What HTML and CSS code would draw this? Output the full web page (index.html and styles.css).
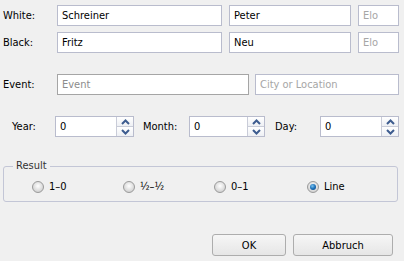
FILE: index.html
```html
<!DOCTYPE html>
<html>
<head>
<meta charset="utf-8">
<link rel="stylesheet" href="styles.css">
</head>
<body>
<div class="dlg">
  <div class="row r-white">
    <span class="lbl">White:</span>
    <div class="field w-last">Schreiner</div>
    <div class="field w-first">Peter</div>
    <div class="field w-elo ph">Elo</div>
  </div>
  <div class="row r-black">
    <span class="lbl">Black:</span>
    <div class="field w-last">Fritz</div>
    <div class="field w-first">Neu</div>
    <div class="field w-elo ph">Elo</div>
  </div>
  <div class="row r-event">
    <span class="lbl">Event:</span>
    <div class="field w-event ph dark focus">Event</div>
    <div class="field w-city ph">City or Location</div>
  </div>
  <div class="row r-date">
    <span class="lbl l-year">Year:</span>
    <div class="spin s-year">
      <span class="spin-val">0</span>
      <span class="spin-btns">
        <span class="sb"><svg width="9" height="6" viewBox="0 0 9 6"><path d="M1 5 L4.5 1.5 L8 5" fill="none" stroke="#3d5c8f" stroke-width="2"/></svg></span>
        <span class="sb"><svg width="9" height="6" viewBox="0 0 9 6"><path d="M1 1 L4.5 4.5 L8 1" fill="none" stroke="#3d5c8f" stroke-width="2"/></svg></span>
      </span>
    </div>
    <span class="lbl l-month">Month:</span>
    <div class="spin s-month">
      <span class="spin-val">0</span>
      <span class="spin-btns">
        <span class="sb"><svg width="9" height="6" viewBox="0 0 9 6"><path d="M1 5 L4.5 1.5 L8 5" fill="none" stroke="#3d5c8f" stroke-width="2"/></svg></span>
        <span class="sb"><svg width="9" height="6" viewBox="0 0 9 6"><path d="M1 1 L4.5 4.5 L8 1" fill="none" stroke="#3d5c8f" stroke-width="2"/></svg></span>
      </span>
    </div>
    <span class="lbl l-day">Day:</span>
    <div class="spin s-day">
      <span class="spin-val">0</span>
      <span class="spin-btns">
        <span class="sb"><svg width="9" height="6" viewBox="0 0 9 6"><path d="M1 5 L4.5 1.5 L8 5" fill="none" stroke="#3d5c8f" stroke-width="2"/></svg></span>
        <span class="sb"><svg width="9" height="6" viewBox="0 0 9 6"><path d="M1 1 L4.5 4.5 L8 1" fill="none" stroke="#3d5c8f" stroke-width="2"/></svg></span>
      </span>
    </div>
  </div>
  <div class="group">
    <span class="legend">Result</span>
    <div class="radios">
      <span class="radio"><span class="dot"></span>1–0</span>
      <span class="radio"><span class="dot"></span>½–½</span>
      <span class="radio"><span class="dot"></span>0–1</span>
      <span class="radio"><span class="dot on"></span>Line</span>
    </div>
  </div>
  <div class="buttons">
    <span class="btn b-ok">OK</span>
    <span class="btn b-cancel">Abbruch</span>
  </div>
</div>
</body>
</html>
```

FILE: styles.css
```css
html, body {
  margin: 0;
  padding: 0;
}
body {
  background: #f0f0f0;
  font-family: "DejaVu Sans Condensed", "Liberation Sans", sans-serif;
  font-size: 11px;
  color: #000;
  width: 404px;
  height: 261px;
  overflow: hidden;
}
.dlg {
  padding: 5px 0 0 3px;
}
.row {
  display: flex;
  align-items: center;
  height: 21px;
}
.r-white { margin-bottom: 6px; }
.r-black { margin-bottom: 21px; }
.r-event { margin-bottom: 21px; }
.lbl {
  width: 54px;
  flex: none;
}
.field {
  box-sizing: border-box;
  height: 21px;
  border: 1px solid #b9bccd;
  background: #fff;
  padding-left: 4px;
  line-height: 19px;
  flex: none;
  white-space: nowrap;
  overflow: hidden;
}
.ph { color: #a6a6a6; }
.ph.dark { color: #8c8c8c; }
.focus { border-color: #a5a5a5; }
.w-last { width: 165px; margin-right: 7px; }
.w-first { width: 122px; margin-right: 7px; }
.w-elo { width: 41px; }
.w-event { width: 192px; margin-right: 6px; }
.w-city { width: 144px; }

.l-year { width: 43px; margin-left: 9px; }
.l-month { width: 46px; margin-left: 9px; }
.l-day { width: 45px; margin-left: 10px; }
.spin {
  box-sizing: border-box;
  height: 21px;
  border: 1px solid #b9bccd;
  background: #fff;
  display: flex;
  flex: none;
}
.s-year { width: 79px; }
.s-month { width: 76px; }
.s-day { width: 79px; }
.spin-val {
  flex: 1;
  padding-left: 4px;
  line-height: 19px;
}
.spin-btns {
  width: 16px;
  display: flex;
  flex-direction: column;
  border-left: 1px solid #c9ccd8;
}
.sb {
  flex: 1;
  display: flex;
  align-items: center;
  justify-content: center;
  background: linear-gradient(#ffffff, #eef0f4);
}
.sb + .sb {
  border-top: 1px solid #c9ccd8;
}
.sb svg { display: block; }

.group {
  position: relative;
  box-sizing: border-box;
  margin-top: 29px;
  width: 395px;
  height: 36px;
  border: 1px solid #c3c6d6;
  border-radius: 3px;
}
.legend {
  position: absolute;
  top: -8px;
  left: 9px;
  padding: 0 3px;
  background: #f0f0f0;
  color: #333;
  line-height: 14px;
}
.radios {
  display: grid;
  grid-template-columns: 91px 91px 93px 91px;
  padding: 14px 0 0 28px;
}
.radio {
  display: flex;
  align-items: center;
  height: 12px;
  line-height: 12px;
}
.dot {
  box-sizing: border-box;
  width: 12px;
  height: 12px;
  border-radius: 50%;
  border: 1px solid #9a9a9a;
  background: radial-gradient(circle at 50% 40%, #ffffff 0%, #e4e4e4 45%, #c4c4c4 100%);
  margin-right: 5px;
  position: relative;
  flex: none;
}
.dot.on::after {
  content: "";
  position: absolute;
  left: 2px;
  top: 2px;
  width: 6px;
  height: 6px;
  border-radius: 50%;
  background: radial-gradient(circle at 40% 35%, #7cc4f0 0%, #1c70b8 50%, #0c3f78 100%);
}

.buttons {
  display: flex;
  justify-content: flex-end;
  gap: 7px;
  margin-top: 32px;
  padding-right: 11px;
}
.btn {
  box-sizing: border-box;
  height: 22px;
  border: 1px solid #adadad;
  border-radius: 3px;
  background: linear-gradient(#f6f6f6, #e6e6e6);
  display: flex;
  align-items: center;
  justify-content: center;
}
.b-ok { width: 74px; }
.b-cancel { width: 100px; }
```
